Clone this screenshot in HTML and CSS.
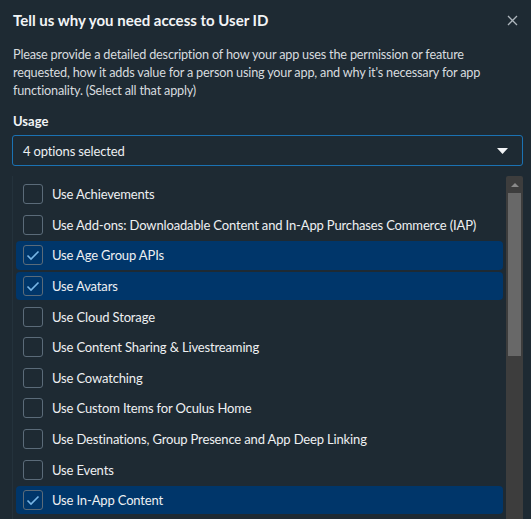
FILE: index.html
```html
<!DOCTYPE html>
<html>
<head>
<meta charset="utf-8">
<link rel="stylesheet" href="styles.css">
</head>
<body>
<div class="dialog">
  <div class="header">
    <h1 class="title">Tell us why you need access to User ID</h1>
    <svg class="close" width="11" height="11" viewBox="0 0 11 11"><path d="M1 1L10 10M10 1L1 10" stroke="#aeb6bd" stroke-width="1.3"/></svg>
  </div>
  <p class="desc">Please provide a detailed description of how your app uses the permission or feature requested, how it adds value for a person using your app, and why it's necessary for app functionality. (Select all that apply)</p>
  <div class="label">Usage</div>
  <div class="select">
    <span>4 options selected</span>
    <svg class="caret" width="11" height="6" viewBox="0 0 11 6"><path d="M0 0H11L5.5 6Z" fill="#f2f4f6"/></svg>
  </div>
  <div class="dropdown">
    <div class="list">
      <div class="row"><span class="box"></span><span class="txt">Use Achievements</span></div>
      <div class="row"><span class="box"></span><span class="txt">Use Add-ons: Downloadable Content and In-App Purchases Commerce (IAP)</span></div>
      <div class="row sel"><span class="box"><svg width="14" height="11" viewBox="0 0 14 11"><path d="M1.5 5.5L5 9L12.5 1.5" fill="none" stroke="#78b6e6" stroke-width="1.6"/></svg></span><span class="txt">Use Age Group APIs</span></div>
      <div class="row sel"><span class="box"><svg width="14" height="11" viewBox="0 0 14 11"><path d="M1.5 5.5L5 9L12.5 1.5" fill="none" stroke="#78b6e6" stroke-width="1.6"/></svg></span><span class="txt">Use Avatars</span></div>
      <div class="row"><span class="box"></span><span class="txt">Use Cloud Storage</span></div>
      <div class="row"><span class="box"></span><span class="txt">Use Content Sharing &amp; Livestreaming</span></div>
      <div class="row"><span class="box"></span><span class="txt">Use Cowatching</span></div>
      <div class="row"><span class="box"></span><span class="txt">Use Custom Items for Oculus Home</span></div>
      <div class="row"><span class="box"></span><span class="txt">Use Destinations, Group Presence and App Deep Linking</span></div>
      <div class="row"><span class="box"></span><span class="txt">Use Events</span></div>
      <div class="row sel"><span class="box"><svg width="14" height="11" viewBox="0 0 14 11"><path d="M1.5 5.5L5 9L12.5 1.5" fill="none" stroke="#78b6e6" stroke-width="1.6"/></svg></span><span class="txt">Use In-App Content</span></div>
    </div>
    <div class="scrollbar">
      <div class="arrow"></div>
      <div class="thumb"></div>
    </div>
  </div>
</div>
</body>
</html>
```

FILE: styles.css
```css
html, body {
  margin: 0;
  padding: 0;
  background: #1e2a33;
  height: 100%;
  overflow: hidden;
}
body {
  font-family: Lato, "Noto Sans", sans-serif;
  color: #e4e7ea;
}
.dialog {
  padding: 0 8px 0 12px;
}
.header {
  display: flex;
  justify-content: space-between;
  align-items: center;
  height: 40px;
  padding-left: 1px;
}
.title {
  margin: 0;
  font-size: 15px;
  font-weight: 700;
  color: #f2f4f6;
}
.close {
  margin-right: 5px;
  margin-top: 1px;
}
.desc {
  margin: 5px 0 0 1px;
  font-size: 12.7px;
  letter-spacing: -0.2px;
  line-height: 18px;
  color: #d7dbdf;
  width: 480px;
}
.label {
  margin: 13px 0 0 1px;
  font-size: 13px;
  font-weight: 700;
  color: #f2f4f6;
  height: 18px;
  line-height: 18px;
}
.select {
  margin-top: 5px;
  height: 29px;
  border: 1px solid #1b72b3;
  border-radius: 3px;
  display: flex;
  align-items: center;
  justify-content: space-between;
  padding: 0 14px 0 10px;
  font-size: 13px;
  letter-spacing: -0.15px;
  color: #eceff1;
}
.caret {
  margin-top: 1px;
}
.dropdown {
  margin-top: 10px;
  display: flex;
  height: 343px;
  overflow: hidden;
  border-left: 1px solid #24323c;
}
.list {
  flex: 1;
  padding: 4px 3px 0 3px;
}
.row {
  height: 28.5px;
  margin-bottom: 2.1px;
  display: flex;
  align-items: center;
  padding-left: 7px;
  border-radius: 4px;
  font-size: 13px;
  letter-spacing: -0.15px;
  color: #eef0f2;
  white-space: nowrap;
}
.row.sel {
  background: #00366a;
}
.box {
  width: 18px;
  height: 18px;
  border: 1px solid #5b6b79;
  border-radius: 3px;
  display: flex;
  align-items: center;
  justify-content: center;
  margin-right: 9px;
  flex: none;
}
.scrollbar {
  width: 17px;
  background: #3d3d3d;
  border-radius: 2px 2px 0 0;
  display: flex;
  flex-direction: column;
  align-items: center;
}
.arrow {
  margin-top: 7px;
  width: 0;
  height: 0;
  border-left: 4px solid transparent;
  border-right: 4px solid transparent;
  border-bottom: 4px solid #8a8a8a;
}
.thumb {
  margin-top: 6px;
  width: 13px;
  height: 163px;
  background: #686868;
}
```
